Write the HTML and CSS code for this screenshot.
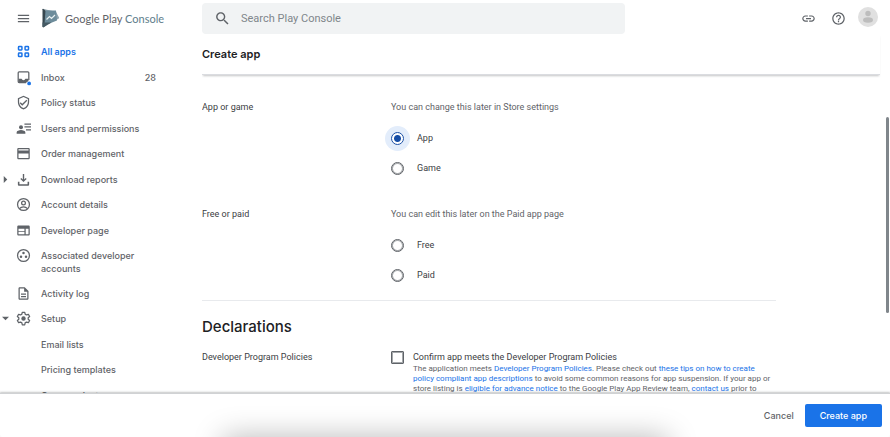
FILE: index.html
```
<!DOCTYPE html>
<html lang="en">
<head>
  <meta charset="UTF-8">
  <meta name="viewport" content="width=device-width, initial-scale=1.0">
  <title>Create app | Google Play Console</title>
  <link rel="stylesheet" href="styles.css">
</head>
<body>

  <div class="shell">
    <aside class="sidebar">
      <div class="brand">
        <button class="icon-btn" type="button" aria-label="Menu">
          <svg class="icon" viewBox="0 0 24 24"><path d="M3 18h18v-2H3v2zm0-5h18v-2H3v2zm0-7v2h18V6H3z"/></svg>
        </button>
        <a class="logo" href="#">
          <svg class="logo-mark" viewBox="0 0 18 20">
            <path fill="#37474f" d="M1 1.200Q1 .500 2.200 1L5 2.500v14L2.200 19.200Q1 19.500 1 18.500z"/>
            <path fill="#90a4ae" d="M2 1 14.500 3.800 17 8.500Q18.300 9.800 17 10.700L14.500 12z"/>
            <path fill="#6d8c9b" d="M4 2.500h10.500L15.500 12.500 8 15.500H3z"/>
            <path fill="#455a64" d="M1 14.500h9L2.200 19.200Q1 19.600 1 18.500z"/>
            <path fill="none" stroke="#e8f0f2" stroke-width="1.200" d="M5 11.500 8 8.500l2 2L13.500 7"/>
          </svg>
          <span>Google Play <span class="logo-light">Console</span></span>
        </a>
      </div>

      <nav>
        <ul class="menu">
          <li>
            <a class="active" href="#">
              <svg class="icon" viewBox="0 0 24 24"><g fill="none" stroke="currentColor" stroke-width="2.400"><rect x="4" y="4" width="5.500" height="5.500" rx="1"/><rect x="14.500" y="4" width="5.500" height="5.500" rx="1"/><rect x="4" y="14.500" width="5.500" height="5.500" rx="1"/><rect x="14.500" y="14.500" width="5.500" height="5.500" rx="1"/></g></svg>
              <span>All apps</span>
            </a>
          </li>
          <li>
            <a href="#">
              <svg class="icon" viewBox="0 0 24 24"><path fill="none" stroke="currentColor" stroke-width="2" d="M16 20H5c-1 0-1.500-.5-1.500-1.500V4.500C3.500 3.500 4 3 5 3h14c1 0 1.500.5 1.500 1.500V16"/><path d="M4 14h5c.5 1.500 1.500 2.200 3 2.200s2.500-.7 3-2.200h5v3l-3 3H4z"/><circle cx="21" cy="21.500" r="3" fill="#1a73e8"/></svg>
              <span>Inbox</span>
              <span class="count">28</span>
            </a>
          </li>
          <li>
            <a href="#">
              <svg class="icon" viewBox="0 0 24 24"><path d="M12 1 3 5v6c0 5.550 3.840 10.740 9 12 5.160-1.260 9-6.450 9-12V5l-9-4zm7 10c0 4.520-2.980 8.690-7 9.930-4.020-1.240-7-5.410-7-9.930V6.300l7-3.110 7 3.110V11zm-11.590.590L6 13l4 4 8-8-1.410-1.420L10 14.170z"/></svg>
              <span>Policy status</span>
            </a>
          </li>
          <li>
            <a href="#">
              <svg class="icon" viewBox="0 0 24 24"><circle cx="8" cy="10" r="3.200"/><path d="M1 20.500v-2.300c0-2.200 4-3.700 7-3.700s7 1.500 7 3.700v2.300zM13.500 4H24v2H13.500zM13.500 8.500H24v2H13.500zM16 13h8v2h-8z"/></svg>
              <span>Users and permissions</span>
            </a>
          </li>
          <li>
            <a href="#">
              <svg class="icon" viewBox="0 0 24 24"><path d="M20 3H4c-1.110 0-2 .9-2 2v14c0 1.100.890 2 2 2h16c1.110 0 2-.9 2-2V5c0-1.100-.890-2-2-2zm0 16H4v-7h16v7zm0-12H4V5h16v2z"/></svg>
              <span>Order management</span>
            </a>
          </li>
          <li>
            <a href="#">
              <svg class="arrow" viewBox="0 0 8 8"><path d="M2 0l4 4-4 4z"/></svg>
              <svg class="icon" viewBox="0 0 24 24"><path d="M18.500 15.500v4h-13v-4H3V20c0 1.100.9 2 2 2h14c1.100 0 2-.9 2-2v-4.500zM17 11l-1.400-1.400-2.500 2.500V3h-2.200v9.100L8.400 9.600 7 11l5 5z"/></svg>
              <span>Download reports</span>
            </a>
          </li>
          <li>
            <a href="#">
              <svg class="icon" viewBox="0 0 24 24"><g fill="none" stroke="currentColor" stroke-width="2"><circle cx="12" cy="12" r="9.500"/><circle cx="12" cy="9.500" r="3"/><path d="M5.500 18.500c3.500-3.700 9.500-3.700 13 0"/></g></svg>
              <span>Account details</span>
            </a>
          </li>
          <li>
            <a href="#">
              <svg class="icon" viewBox="0 0 24 24"><path d="M20 4H4c-1.100 0-2 .9-2 2v12c0 1.100.9 2 2 2h16c1.100 0 2-.9 2-2V6c0-1.100-.9-2-2-2zM13.500 18H4v-3.500h9.500zm0-5H4V9h9.500zM20 18h-4.500V9H20z"/></svg>
              <span>Developer page</span>
            </a>
          </li>
          <li>
            <a href="#">
              <svg class="icon" viewBox="0 0 24 24"><circle cx="12" cy="12" r="9.500" fill="none" stroke="currentColor" stroke-width="2"/><circle cx="12" cy="8" r="2"/><circle cx="8" cy="14" r="2"/><circle cx="16" cy="14" r="2"/></svg>
              <span>Associated developer accounts</span>
            </a>
          </li>
          <li>
            <a href="#">
              <svg class="icon" viewBox="0 0 24 24"><path d="M8 16h8v2H8zm0-4h8v2H8zm6-10H6c-1.100 0-2 .9-2 2v16c0 1.100.890 2 1.990 2H18c1.100 0 2-.9 2-2V8l-6-6zm4 18H6V4h7v5h5v11z"/></svg>
              <span>Activity log</span>
            </a>
          </li>
          <li>
            <a href="#">
              <svg class="arrow" viewBox="0 0 8 8"><path d="M0 2h8L4 6z"/></svg>
              <svg class="icon" viewBox="0 0 24 24"><path fill="none" stroke="currentColor" stroke-width="2" stroke-linejoin="round" d="M10 2h4l.6 3 2.200 1.300 3-1 2 3.500-2.300 2v2.400l2.300 2-2 3.500-3-1-2.200 1.300L14 22h-4l-.6-3-2.200-1.300-3 1-2-3.500 2.300-2v-2.400l-2.300-2 2-3.500 3 1L9.400 5z"/><circle cx="12" cy="12" r="3.500"/></svg>
              <span>Setup</span>
            </a>
          </li>
          <li><a class="sub" href="#">Email lists</a></li>
          <li><a class="sub" href="#">Pricing templates</a></li>
          <li><a class="sub" href="#">Game projects</a></li>
        </ul>
      </nav>
    </aside>

    <main class="main">
      <header class="topbar">
        <label class="search">
          <svg class="icon-search" viewBox="0 0 24 24"><path d="M15.500 14h-.790l-.280-.270C15.410 12.590 16 11.110 16 9.500 16 5.910 13.090 3 9.500 3S3 5.910 3 9.500 5.910 16 9.500 16c1.610 0 3.090-.590 4.230-1.570l.270.280v.790l5 4.990L20.490 19l-4.990-5zm-6 0C7.010 14 5 11.990 5 9.500S7.010 5 9.500 5 14 7.010 14 9.500 11.990 14 9.500 14z"/></svg>
          <input type="search" placeholder="Search Play Console" aria-label="Search Play Console">
        </label>
        <div class="actions">
          <button class="icon-btn" type="button" aria-label="Copy link">
            <svg class="icon" viewBox="0 0 24 24"><path d="M3.900 12c0-1.710 1.390-3.100 3.100-3.100h4V7H7c-2.760 0-5 2.240-5 5s2.240 5 5 5h4v-1.900H7c-1.710 0-3.100-1.390-3.100-3.100zM8 13h8v-2H8v2zm9-6h-4v1.900h4c1.710 0 3.100 1.390 3.100 3.100s-1.390 3.100-3.100 3.100h-4V17h4c2.760 0 5-2.240 5-5s-2.240-5-5-5z"/></svg>
          </button>
          <button class="icon-btn" type="button" aria-label="Help">
            <svg class="icon" viewBox="0 0 24 24"><path d="M11 18h2v-2h-2v2zm1-16C6.480 2 2 6.480 2 12s4.480 10 10 10 10-4.480 10-10S17.520 2 12 2zm0 18c-4.410 0-8-3.590-8-8s3.590-8 8-8 8 3.590 8 8-3.590 8-8 8zm0-14c-2.210 0-4 1.790-4 4h2c0-1.100.9-2 2-2s2 .9 2 2c0 2-3 1.750-3 5h2c0-2.250 3-2.500 3-5 0-2.210-1.790-4-4-4z"/></svg>
          </button>
          <button class="icon-btn avatar" type="button" aria-label="Account">
            <svg viewBox="0 0 20 20"><circle cx="10" cy="10" r="10" fill="#e0e0e0"/><circle cx="10" cy="6.500" r="2.700" fill="#bdbdbd"/><ellipse cx="10" cy="13" rx="5" ry="2.800" fill="#bdbdbd"/></svg>
          </button>
        </div>
      </header>

      <h1>Create app</h1>

      <form class="form" id="create-form">
        <fieldset class="row">
          <legend class="row-label">App or game</legend>
          <div class="row-body">
            <p class="hint">You can change this later in Store settings</p>
            <label class="option"><input type="radio" name="type" checked>App</label>
            <label class="option"><input type="radio" name="type">Game</label>
          </div>
        </fieldset>

        <fieldset class="row">
          <legend class="row-label">Free or paid</legend>
          <div class="row-body">
            <p class="hint">You can edit this later on the Paid app page</p>
            <label class="option"><input type="radio" name="price">Free</label>
            <label class="option"><input type="radio" name="price">Paid</label>
          </div>
        </fieldset>

        <section class="declarations">
          <h2>Declarations</h2>
          <div class="row">
            <div class="row-label">Developer Program Policies</div>
            <div class="row-body check">
              <input type="checkbox" id="policies">
              <div>
                <label for="policies">Confirm app meets the Developer Program Policies</label>
                <p>The application meets <a href="#">Developer Program Policies</a>. Please check out <a href="#">these tips on how to create policy compliant app descriptions</a> to avoid some common reasons for app suspension. If your app or store listing is <a href="#">eligible for advance notice</a> to the Google Play App Review team, <a href="#">contact us</a> prior to</p>
              </div>
            </div>
          </div>
        </section>
      </form>
      <div class="scrollbar"></div>
    </main>
  </div>

  <footer class="footer">
    <button class="btn" type="button">Cancel</button>
    <button class="btn btn-primary" type="submit" form="create-form">Create app</button>
  </footer>

</body>
</html>
```
FILE: styles.css
```
* {
  box-sizing: border-box;
}

html {
  background: #202124;
}

body {
  margin: 0;
  height: 100vh;
  display: flex;
  flex-direction: column;
  overflow: hidden;
  background: #fff;
  color: #3c4043;
  font-family: Roboto, sans-serif;
  font-size: 9px;
  line-height: 13px;
}

h1, h2, p, ul {
  margin: 0;
  padding: 0;
}

a {
  color: #1a73e8;
  text-decoration: none;
}

button {
  font: inherit;
  border: 0;
  background: none;
  padding: 0;
  cursor: pointer;
}

.shell {
  flex: 1;
  min-height: 0;
  display: grid;
  grid-template-columns: 202px 1fr;
  background: #fff;
}

.icon {
  width: 15px;
  height: 15px;
  flex: none;
  fill: currentColor;
  overflow: visible;
}

.icon-btn {
  display: flex;
  color: #5f6368;
}

/* Sidebar */
.sidebar {
  min-height: 0;
  overflow: hidden;
  font-family: Inter, sans-serif;
}

.brand {
  display: flex;
  align-items: center;
  gap: 10px;
  height: 36px;
  padding-left: 16px;
}

.logo {
  display: flex;
  align-items: center;
  gap: 5px;
  color: #5f6368;
  font-family: Lato, sans-serif;
  font-size: 11px;
  white-space: nowrap;
}

.logo-mark {
  width: 19px;
  height: 20px;
}

.logo-light {
  color: #607d8b;
}

.menu {
  list-style: none;
  display: grid;
  grid-auto-rows: minmax(26px, auto) minmax(25px, auto);
  padding-top: 9px;
}

.menu a {
  position: relative;
  display: flex;
  align-items: flex-start;
  gap: 10px;
  padding: 0 46px 12px 16px;
  color: #5f6368;
  font-weight: 500;
}

.menu .icon {
  margin: -1px 0;
}

.menu .active {
  color: #1a73e8;
  font-weight: 600;
}

.menu .sub {
  padding-left: 41px;
}

.count {
  margin-left: auto;
}

.arrow {
  position: absolute;
  left: 2px;
  top: 3px;
  width: 7px;
  height: 7px;
  fill: #5f6368;
}

/* Main column */
.main {
  position: relative;
  min-height: 0;
  display: flex;
  flex-direction: column;
  overflow: hidden;
}

.topbar {
  display: flex;
  justify-content: space-between;
  height: 34px;
  padding: 3px 12px 0 0;
}

.search {
  flex: 0 1 423px;
  display: flex;
  align-items: center;
  gap: 10px;
  padding-left: 12px;
  border-radius: 4px;
  background: #f1f3f4;
}

.icon-search {
  width: 17px;
  height: 17px;
  fill: #5f6368;
}

.search input {
  flex: 1;
  min-width: 0;
  border: 0;
  outline: 0;
  padding: 0;
  background: none;
  font-family: Roboto, sans-serif;
  font-size: 11px;
}

.search input::placeholder {
  color: #80868b;
}

.actions {
  display: flex;
  align-items: center;
  gap: 15px;
}

.avatar {
  align-self: flex-start;
  margin: 4px 0 0 -3px;
}

.avatar svg {
  width: 20px;
  height: 20px;
}

h1 {
  height: 41px;
  margin-right: 10px;
  padding-top: 12px;
  color: #202124;
  font-family: Inter, sans-serif;
  font-size: 11px;
  font-weight: 600;
  line-height: 16px;
  border-bottom: 1px solid #dadce0;
  box-shadow: 0 2px 2px -1px rgba(60, 64, 67, 0.3);
}

.form {
  flex: 1;
  min-height: 0;
  overflow: hidden;
  max-width: 574px;
  padding-top: 26px;
}

fieldset {
  min-width: 0;
  margin: 0;
  padding: 0;
  border: 0;
}

fieldset + fieldset {
  margin: 25px 0 10px;
}

.row {
  display: flex;
}

.row-label {
  float: left;
  flex: none;
  width: 189px;
  padding: 0;
}

.row-body {
  flex: 1;
  min-width: 0;
}

.hint {
  margin-bottom: 9px;
  color: #5f6368;
}

.option {
  display: flex;
  align-items: center;
  gap: 13px;
  height: 30px;
}

input[type="radio"],
input[type="checkbox"] {
  appearance: none;
  flex: none;
  width: 13px;
  height: 13px;
  margin: 0;
  border: 1px solid #5f6368;
  box-shadow: inset 0 0 0 1px #a5a8ab;
}

input[type="radio"] {
  border-radius: 50%;
}

input[type="radio"]:checked {
  border-color: #174ea6;
  background: radial-gradient(circle, #174ea6 3px, #fff 4px);
  box-shadow: 0 0 0 6px #e3edfb;
}

input[type="checkbox"] {
  border-radius: 1px;
}

.declarations {
  border-top: 1px solid #e8eaed;
  padding-top: 16px;
}

h2 {
  margin-bottom: 14px;
  color: #202124;
  font-family: Inter, sans-serif;
  font-size: 15px;
  font-weight: 500;
  line-height: 20px;
}

.check {
  display: flex;
  gap: 9px;
}

.check label {
  display: block;
}

.check p {
  font-size: 8px;
  line-height: 10px;
  color: #5f6368;
}

.scrollbar {
  position: absolute;
  top: 117px;
  right: 1px;
  width: 3px;
  height: 196px;
  border-radius: 2px;
  background: #80868b;
}

/* Bottom bar */
.footer {
  position: relative;
  display: flex;
  align-items: center;
  justify-content: flex-end;
  gap: 11px;
  height: 44px;
  padding-right: 8px;
  overflow: hidden;
  background: #fff;
  border-top: 1px solid #d0d2d4;
  border-radius: 0 0 2px 2px;
  box-shadow: 0 -1px 2px rgba(60, 64, 67, 0.3);
  font-family: Inter, sans-serif;
  font-weight: 500;
}

/* soft shadow rising from the bottom edge */
.footer::before {
  content: "";
  position: absolute;
  left: 25%;
  right: 25%;
  top: 100%;
  height: 40px;
  box-shadow: 0 0 30px rgba(0, 0, 0, 0.28);
}

.btn {
  position: relative;
  height: 23px;
  color: #5f6368;
}

.btn-primary {
  padding: 0 15px;
  border-radius: 2px;
  background: #1a73e8;
  color: #fff;
}
```
